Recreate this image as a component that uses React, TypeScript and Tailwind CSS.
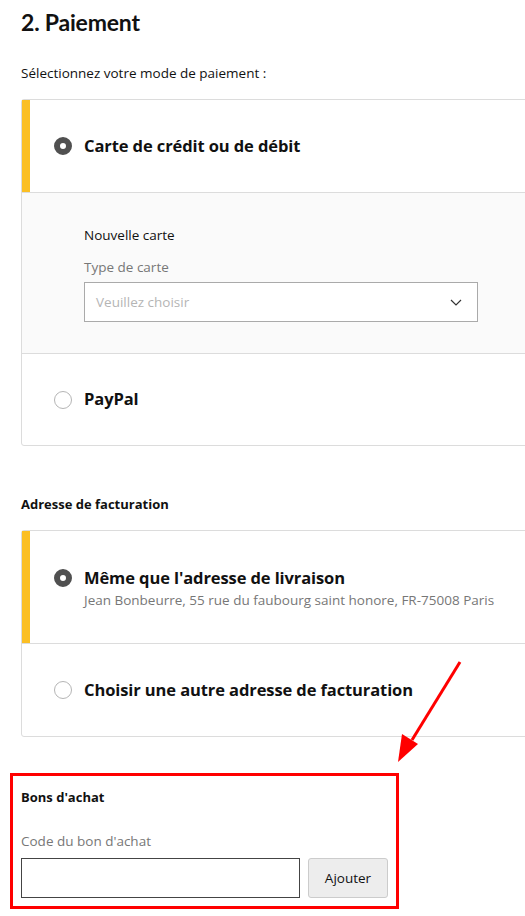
import React from 'react';

const font = { fontFamily: '"Open Sans", "Noto Sans", sans-serif' };
const titleFont = { fontFamily: 'Lato, sans-serif' };

function Radio({ checked }: { checked?: boolean }) {
  return checked ? (
    <span className="inline-block w-[18px] h-[18px] rounded-full border-[6px] border-[#505050] bg-white shrink-0" />
  ) : (
    <span className="inline-block w-[18px] h-[18px] rounded-full border border-[#b5b5b5] bg-white shrink-0" />
  );
}

export default function App() {
  return (
    <div className="relative w-[525px] h-[916px] overflow-hidden bg-white text-[#111]" style={font}>
      <div className="pl-[21px] pt-[7px]">
        <h1 className="text-[23px] font-bold leading-[30px] tracking-[-0.2px]" style={titleFont}>2. Paiement</h1>
        <p className="mt-[27px] text-[13.5px] leading-[18px]">Sélectionnez votre mode de paiement :</p>

        {/* Mode de paiement */}
        <div className="mt-[17px] w-[530px] border border-[#dcdcdc] rounded-[3px]">
          <div className="flex items-center h-[92px] border-l-[8px] border-[#fbbf24] pl-[24px]">
            <Radio checked />
            <span className="ml-[12px] text-[16.5px] font-bold tracking-[-0.1px]">Carte de crédit ou de débit</span>
          </div>
          <div className="bg-[#fafafa] border-t border-[#dcdcdc] pl-[62px] pt-[33px] h-[161px]">
            <p className="text-[13.5px] leading-[18px]">Nouvelle carte</p>
            <p className="mt-[14px] text-[13.5px] leading-[18px] text-[#777]">Type de carte</p>
            <div className="mt-[6px] w-[394px] h-[40px] border border-[#aaa] bg-white flex items-center justify-between px-[11px]">
              <span className="text-[13.5px] text-[#b5b5b5]">Veuillez choisir</span>
              <svg width="14" height="14" viewBox="0 0 14 14" className="mr-[3px]">
                <path d="M2 5l5 5 5-5" fill="none" stroke="#333" strokeWidth="1.2" />
              </svg>
            </div>
          </div>
          <div className="flex items-center h-[92px] border-t border-[#dcdcdc] pl-[32px]">
            <Radio />
            <span className="ml-[12px] text-[16.5px] font-bold tracking-[-0.1px]">PayPal</span>
          </div>
        </div>

        {/* Adresse de facturation */}
        <h2 className="mt-[49px] text-[13px] font-bold leading-[18px]">Adresse de facturation</h2>
        <div className="mt-[17px] w-[530px] border border-[#dcdcdc] rounded-[3px]">
          <div className="flex items-start h-[112px] border-l-[8px] border-[#fbbf24] pl-[24px] pt-[35px]">
            <span className="mt-[3px]"><Radio checked /></span>
            <div className="ml-[12px]">
              <div className="text-[16.5px] font-bold leading-[24px] tracking-[-0.1px]">Même que l'adresse de livraison</div>
              <div className="text-[13.5px] leading-[20px] text-[#777]">Jean Bonbeurre, 55 rue du faubourg saint honore, FR-75008 Paris</div>
            </div>
          </div>
          <div className="flex items-center h-[93px] border-t border-[#dcdcdc] pl-[32px]">
            <Radio />
            <span className="ml-[12px] text-[16.5px] font-bold tracking-[-0.1px]">Choisir une autre adresse de facturation</span>
          </div>
        </div>
      </div>

      {/* Bons d'achat */}
      <div className="ml-[10px] mt-[36px] w-[389px] border-[3px] border-[#ff0000] px-[8px] pt-[12px] pb-[8px]">
        <h3 className="text-[13px] font-bold leading-[18px]">Bons d'achat</h3>
        <p className="mt-[26px] text-[13.5px] leading-[18px] text-[#777]">Code du bon d'achat</p>
        <div className="mt-[8px] flex gap-[8px]">
          <input className="w-[279px] h-[40px] border border-[#444] bg-white outline-none" />
          <button className="w-[80px] h-[40px] bg-[#ededed] border border-[#ccc] rounded-[3px] text-[13.5px]">Ajouter</button>
        </div>
      </div>

      <svg className="absolute left-0 top-0 pointer-events-none" width="525" height="916">
        <line x1="460" y1="662" x2="412" y2="740" stroke="#ff0000" strokeWidth="3" />
        <polygon points="398,762 402,734 418,744" fill="#ff0000" />
      </svg>
    </div>
  );
}
